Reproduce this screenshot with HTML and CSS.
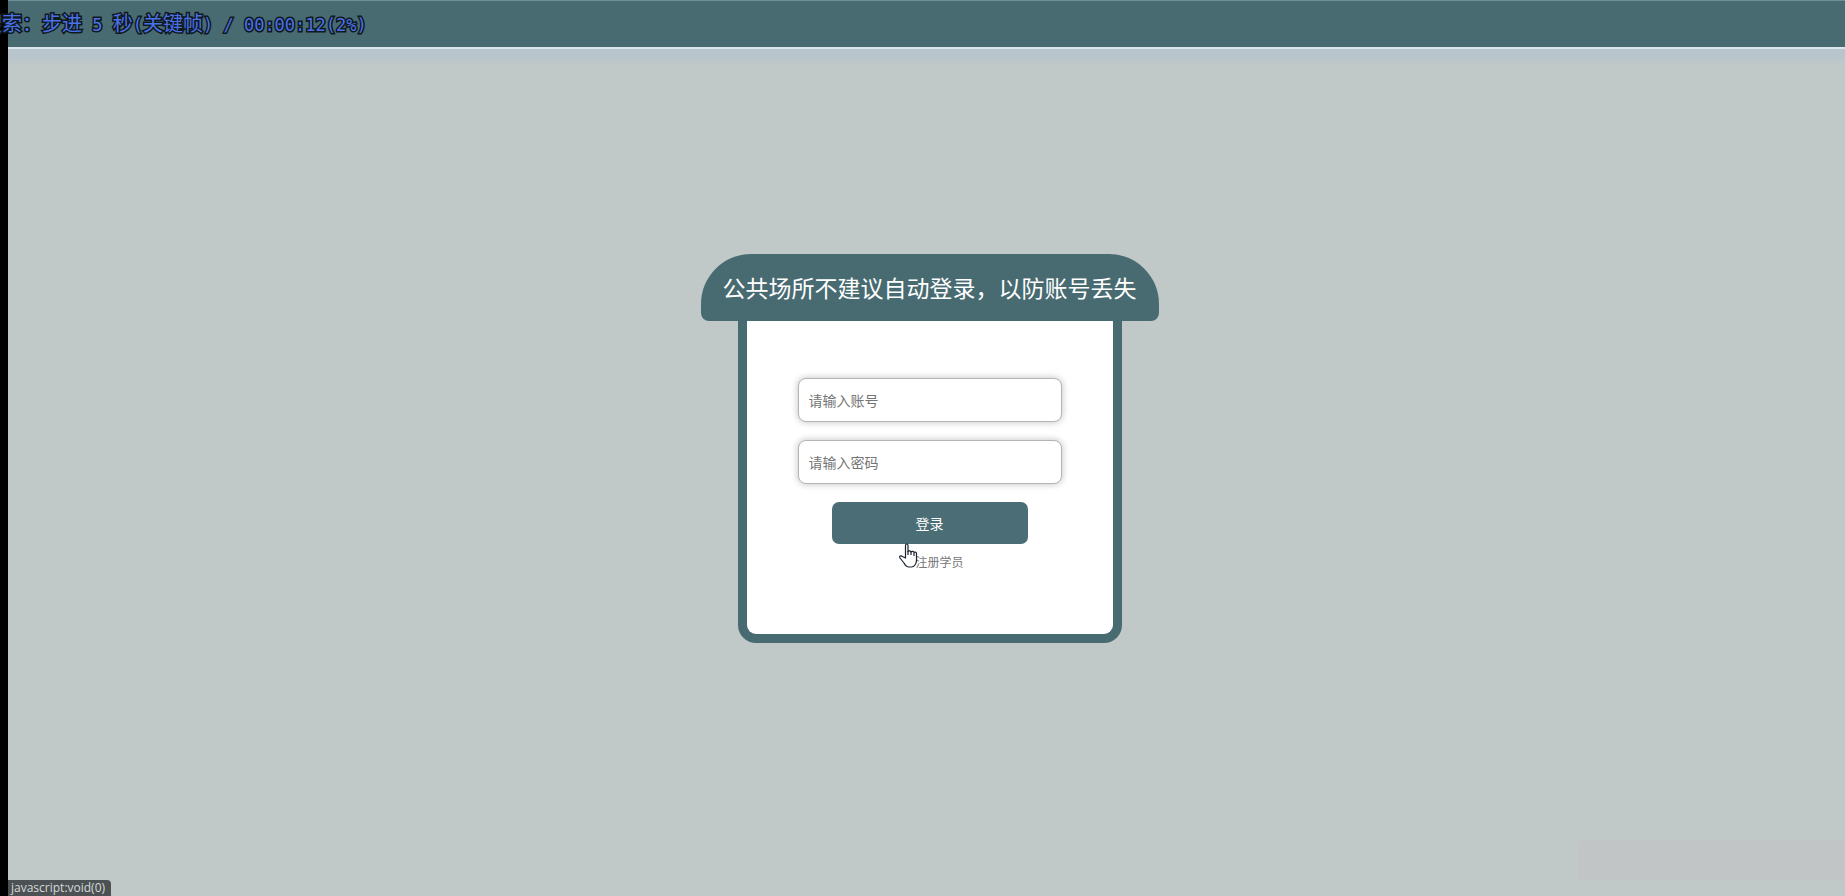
FILE: index.html
```html
<!DOCTYPE html>
<html lang="zh-CN">
<head>
    <meta charset="UTF-8">
    <meta name="viewport" content="width=device-width, initial-scale=1.0">
    <title>登录</title>
    <link rel="stylesheet" href="styles.css">
</head>
<body>
    <div class="page">
        <div class="nav"></div>
        <div class="main">
            <div class="login">
                <h1 class="title">公共场所不建议自动登录，以防账号丢失</h1>
                <form class="box">
                    <input type="text" class="input" placeholder="请输入账号" aria-label="请输入账号">
                    <input type="password" class="input" placeholder="请输入密码" aria-label="请输入密码">
                    <div class="actions">
                        <button type="button" class="btn">登录</button>
                        <!-- hand pointer -->
                        <svg class="pointer" width="20" height="26" viewBox="0 0 20 26" aria-hidden="true">
                            <path d="M6.500 15V2.500c0-2 2.500-2 2.500 0v6c.5-1 2.800-1 3 .5.500-1 2.800-.8 3 .5.600-.8 2.500-.5 2.500 1V17c0 4-2.500 7-5 7H10c-2 0-3.500-1-5-4l-4-5c-1-1.800.8-2.800 2.500-1.500z" fill="#fff" stroke="#1c2230" stroke-width="1.200" stroke-linejoin="round"/>
                            <path d="M9 8v4M12 9v3M15 10v3" stroke="#1c2230" stroke-width="1.200"/>
                        </svg>
                    </div>
                    <a href="javascript:void(0)" class="reg">注册学员</a>
                </form>
            </div>
        </div>
    </div>

    <div class="osd">搜索：步进<span class="num"> 5 </span>秒<span class="num">(</span>关键帧<span class="num">) / 00:00:12(2%)</span></div>
    <div class="status">javascript:void(0)</div>
    <div class="patch"></div>
</body>
</html>
```
FILE: styles.css
```css
*{
    margin: 0;
    padding: 0;
    box-sizing: border-box;
    font-family: "Noto Sans CJK SC", sans-serif;
}
body{
    min-height: 100vh;
    position: relative;
}
.page{
    min-height: 100vh;
    border-left: 8px solid #000;
    background-color: #c1c9c8;
    display: flex;
    flex-direction: column;
}
.nav{
    height: 49px;
    background-color: #486b72;
    border-top: 1px solid #6d9098;
    border-bottom: 2px solid #dce5ec;
}
.main{
    flex: 1;
    padding: 0 0 49px 6px;
    background-image: linear-gradient(#b9c5cc 0, #b9c5cc 8px, #c1c9c8 18px);
    display: flex;
    justify-content: center;
    align-items: center;
}
.login{
    display: flex;
    flex-direction: column;
    align-items: center;
}
.title{
    padding: 16px 22px;
    border-radius: 50px 50px 8px 8px;
    background-color: #486b72;
    color: #fff;
    font-size: 23px;
    font-weight: 400;
    line-height: 35px;
}
.box{
    width: 384px;
    padding: 57px 50px 62px;
    border: 9px solid #486b72;
    border-top: none;
    border-radius: 0 0 18px 18px;
    background-color: #fff;
    display: flex;
    flex-direction: column;
    align-items: center;
}
.input{
    height: 44px;
    width: 264px;
    margin-bottom: 18px;
    padding: 0 10px;
    border: 1px solid #b4b4b4;
    border-radius: 8px;
    outline: none;
    box-shadow: 0 0 6px 1px rgba(0,0,0,0.2);
    font-size: 14px;
}
.input::placeholder{
    color: #757575;
}
.actions{
    position: relative;
}
.btn{
    display: block;
    height: 42px;
    width: 196px;
    border: none;
    border-radius: 7px;
    background-color: #4b6d75;
    color: #fff;
    font-size: 14px;
}
.pointer{
    position: absolute;
    left: 67px;
    top: 41px;
}
.reg{
    margin-top: 8px;
    padding-left: 20px;
    color: #777;
    font-size: 12px;
    line-height: 20px;
    text-decoration: none;
}
.osd{
    position: absolute;
    left: -18px;
    top: 8px;
    color: #4a72e8;
    font-size: 20px;
    line-height: 30px;
    white-space: pre;
    -webkit-text-stroke: 3px #10191d;
    paint-order: stroke fill;
}
.num{
    font-family: "DejaVu Sans Mono", monospace;
    font-size: 17px;
}
.status{
    position: absolute;
    left: 8px;
    bottom: 0;
    padding: 0 6px 0 3px;
    border-top-right-radius: 4px;
    background-color: #4c5253;
    color: #d5dada;
    font-family: "Open Sans", sans-serif;
    font-size: 12px;
    line-height: 16px;
}
.patch{
    position: absolute;
    right: 0;
    bottom: 15px;
    height: 40px;
    width: 266px;
    background-color: #c1c5c5;
}
```
